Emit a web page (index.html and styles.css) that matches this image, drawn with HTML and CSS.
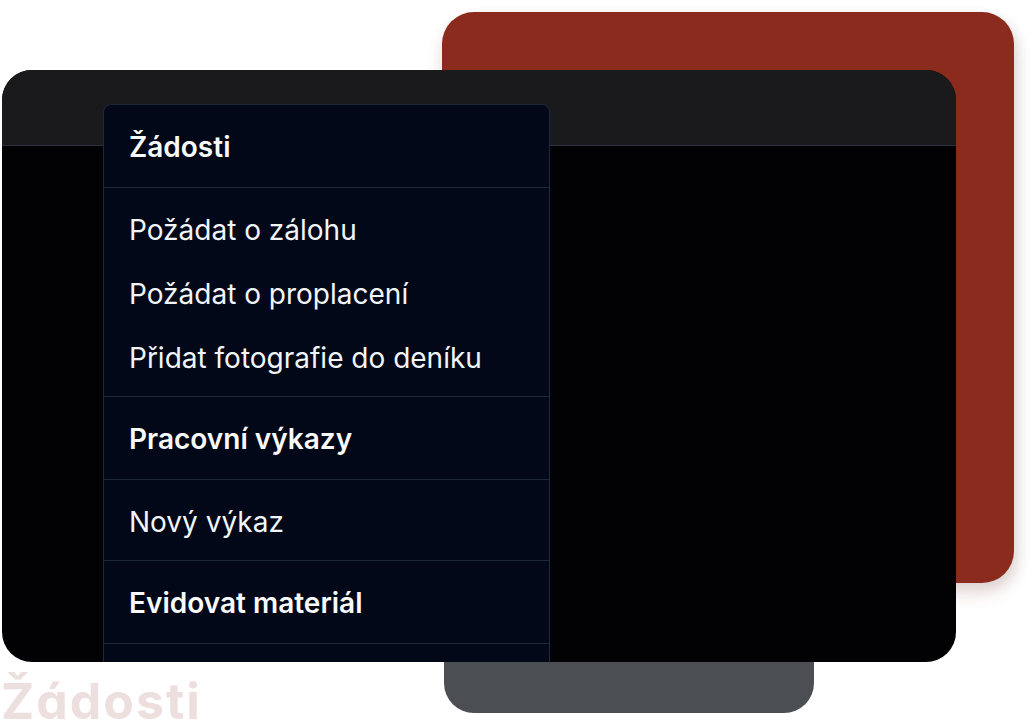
FILE: index.html
```html
<!DOCTYPE html>
<html lang="cs">
<head>
    <meta charset="UTF-8">
    <meta name="viewport" content="width=device-width, initial-scale=1.0">
    <title>Žádosti</title>
    <link rel="stylesheet" href="styles.css">
</head>
<body>

    <div class="stage">
        <!-- Background cards -->
        <div class="card card-red"></div>
        <div class="card card-gray"></div>

        <!-- App window with open menu -->
        <div class="window">
            <div class="window-bar"></div>
            <div class="window-body"></div>

            <nav class="menu">
                <div class="menu-section menu-heading">Žádosti</div>
                <div class="menu-section menu-list">
                    <a href="#" class="menu-item">Požádat o zálohu</a>
                    <a href="#" class="menu-item">Požádat o proplacení</a>
                    <a href="#" class="menu-item">Přidat fotografie do deníku</a>
                </div>
                <div class="menu-section menu-heading">Pracovní výkazy</div>
                <div class="menu-section menu-list">
                    <a href="#" class="menu-item">Nový výkaz</a>
                </div>
                <div class="menu-section menu-heading">Evidovat materiál</div>
                <div class="menu-section menu-list menu-more"></div>
            </nav>
        </div>

        <div class="watermark">Žádosti</div>
    </div>

</body>
</html>
```

FILE: styles.css
```css
:root {
    --red: #8b2b1e;
    --gray: #4b4e53;
    --bar-color: #1a1a1c;
    --body-color: #020204;
    --menu-bg: #020817;
    --menu-border: #1e293b;
    --text-color: #f8fafc;
    --font: 'Inter', 'Noto Sans', sans-serif;
}

html, body {
    margin: 0;
    padding: 0;
    background: #ffffff;
    font-family: var(--font);
}

.stage {
    position: relative;
    width: 1034px;
    height: 725px;
    overflow: hidden;
}

/* Stacked cards behind the window */
.card {
    position: absolute;
    border-radius: 32px;
}

.card-red {
    left: 442px;
    top: 12px;
    width: 572px;
    height: 571px;
    background-color: var(--red);
    box-shadow: 4px 5px 14px rgba(0, 0, 0, 0.1), 0 12px 18px rgba(139, 43, 30, 0.12);
}

.card-gray {
    left: 444px;
    top: 560px;
    width: 370px;
    height: 153px;
    background-color: var(--gray);
    border-radius: 30px;
}

/* Main window */
.window {
    position: absolute;
    left: 2px;
    top: 70px;
    width: 954px;
    height: 592px;
    border-radius: 30px;
    overflow: hidden;
    display: flex;
    flex-direction: column;
    background-color: var(--body-color);
}

.window-bar {
    height: 75px;
    background-color: var(--bar-color);
    border-bottom: 1px solid #283140;
}

.window-body {
    flex: 1;
}

/* Dropdown menu */
.menu {
    position: absolute;
    left: 101px;
    top: 34px;
    width: 445px;
    background-color: var(--menu-bg);
    border: 1px solid var(--menu-border);
    border-radius: 8px;
}

.menu-section + .menu-section {
    border-top: 1px solid var(--menu-border);
}

.menu-heading {
    padding: 23px 25px 21px;
    font-size: 28px;
    line-height: 38px;
    font-weight: 600;
    color: var(--text-color);
}

.menu-list {
    padding: 10px 0 6px;
    display: flex;
    flex-direction: column;
}

.menu-item {
    display: block;
    padding: 12px 25px;
    font-size: 28px;
    line-height: 40px;
    color: #f1f5f9;
    text-decoration: none;
}

.menu-more {
    height: 80px;
}

/* Faded label bottom-left */
.watermark {
    position: absolute;
    left: 1px;
    top: 681px;
    font-size: 50px;
    line-height: 40px;
    font-weight: 700;
    letter-spacing: 2px;
    font-feature-settings: "cv11";
    color: #eddfdd;
}
```
